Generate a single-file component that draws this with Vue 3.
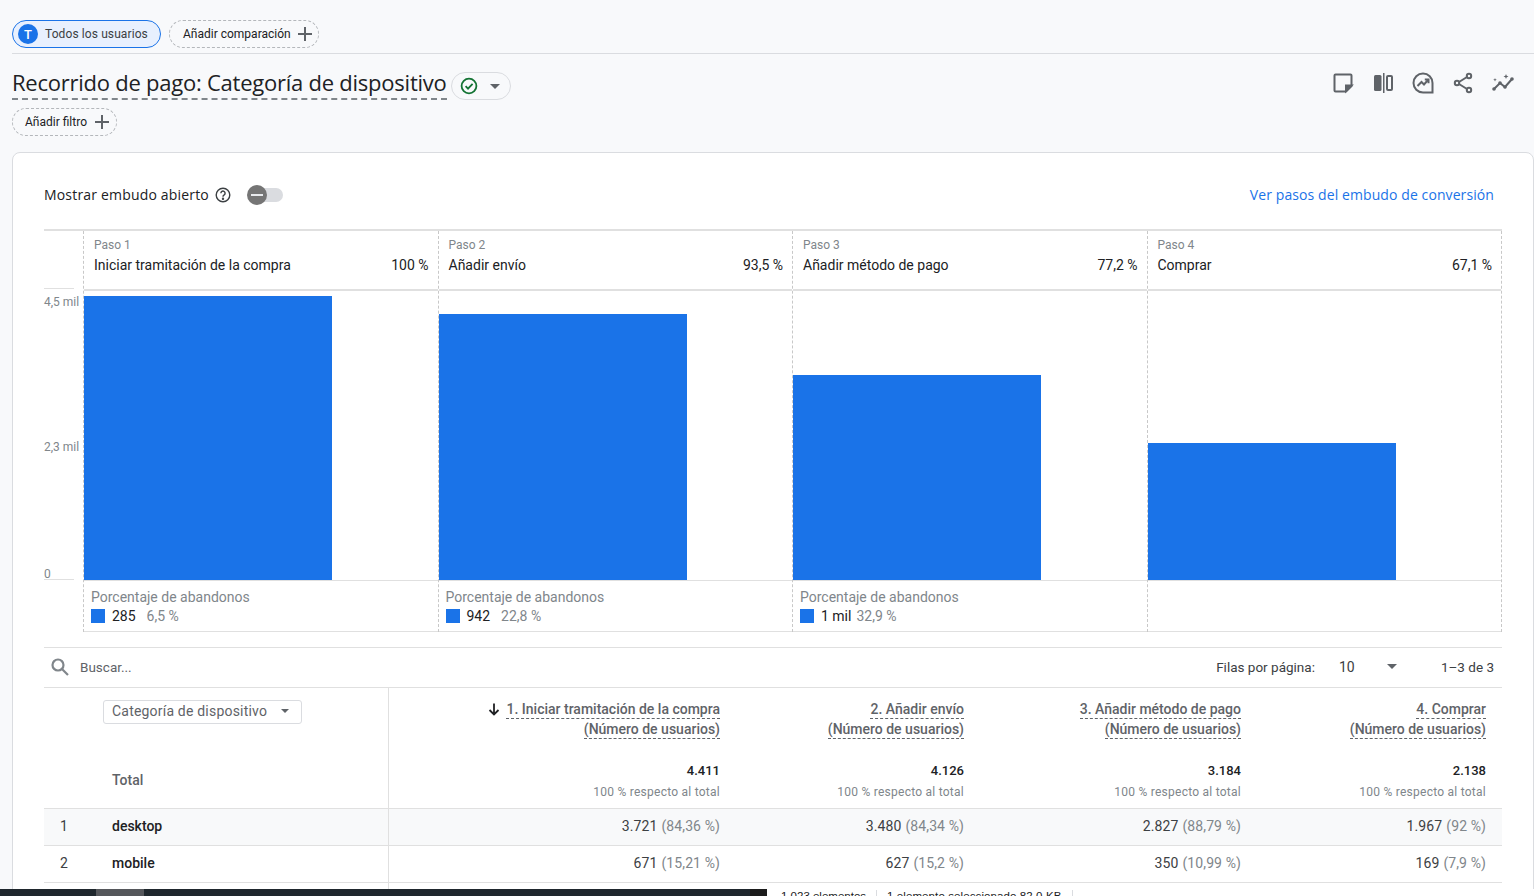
<script setup>
const steps = [
  { n: 'Paso 1', name: 'Iniciar tramitación de la compra', pct: '100 %', h: 284, drop: '285', dropPct: '6,5 %' },
  { n: 'Paso 2', name: 'Añadir envío', pct: '93,5 %', h: 266, drop: '942', dropPct: '22,8 %' },
  { n: 'Paso 3', name: 'Añadir método de pago', pct: '77,2 %', h: 205, drop: '1 mil', dropPct: '32,9 %' },
  { n: 'Paso 4', name: 'Comprar', pct: '67,1 %', h: 137 }
]

const columns = [
  { title: '1. Iniciar tramitación de la compra', total: '4.411', sorted: true },
  { title: '2. Añadir envío', total: '4.126' },
  { title: '3. Añadir método de pago', total: '3.184' },
  { title: '4. Comprar', total: '2.138' }
]

const rows = [
  { id: 1, name: 'desktop', cells: [['3.721', '(84,36 %)'], ['3.480', '(84,34 %)'], ['2.827', '(88,79 %)'], ['1.967', '(92 %)']] },
  { id: 2, name: 'mobile', cells: [['671', '(15,21 %)'], ['627', '(15,2 %)'], ['350', '(10,99 %)'], ['169', '(7,9 %)']] }
]
</script>

<template>
  <div class="page">
    <div class="top-bar">
      <div class="chip chip-active">
        <span class="avatar">T</span>
        <span>Todos los usuarios</span>
      </div>
      <div class="chip chip-add chip-compare">
        <span>Añadir comparación</span>
        <svg class="plus" viewBox="0 0 16 16"><path d="M8 1v14M1 8h14" /></svg>
      </div>
    </div>

    <div class="title-row">
      <div class="title-left">
        <h1 class="title">Recorrido de pago: Categoría de dispositivo</h1>
        <div class="status-pill">
          <svg width="20" height="20" viewBox="0 0 20 20" fill="none" stroke="#137333" stroke-width="1.8">
            <circle cx="10" cy="10" r="7.4" />
            <path d="M6.6 10.2l2.4 2.4 4.6-4.8" />
          </svg>
          <span class="caret"></span>
        </div>
      </div>
      <div class="actions">
        <svg viewBox="0 0 24 24" fill="none" stroke="#5f6368" stroke-width="2">
          <path d="M3.500 4.500a1 1 0 0 1 1-1h15a1 1 0 0 1 1 1V15l-5.500 5.500H4.500a1 1 0 0 1-1-1z" />
          <path d="M15 20v-5.500h5.500l-5.500 5.500z" fill="#5f6368" />
        </svg>
        <svg viewBox="0 0 24 24" fill="#5f6368">
          <rect x="3" y="4" width="7.500" height="16" rx="1.500" />
          <rect x="12" y="2" width="1.500" height="20" />
          <rect x="16" y="5" width="5" height="14" rx="1" fill="none" stroke="#5f6368" stroke-width="2" />
        </svg>
        <svg viewBox="0 0 24 24" fill="none" stroke="#5f6368" stroke-width="2">
          <path d="M12 2.500a9.500 9.500 0 1 0 0 19h9.500V12A9.500 9.500 0 0 0 12 2.500z" />
          <path d="M6.500 15l4-4 2.500 2.500 4-4.500" />
          <path d="M13.800 8.500h3.700v3.700" />
        </svg>
        <svg viewBox="0 0 24 24" fill="none" stroke="#5f6368" stroke-width="2">
          <circle cx="18" cy="5" r="2.200" />
          <circle cx="6" cy="12" r="2.200" />
          <circle cx="18" cy="19" r="2.200" />
          <path d="M8 11l8-5M8 13l8 5" />
        </svg>
        <svg viewBox="0 0 24 24" fill="#5f6368">
          <path d="M3 18l6-6 5 4 7-8" fill="none" stroke="#5f6368" stroke-width="2" />
          <circle cx="3" cy="18" r="1.800" />
          <circle cx="9" cy="12" r="1.800" />
          <circle cx="14" cy="16" r="1.800" />
          <circle cx="21" cy="8" r="1.800" />
          <path d="M15 3l.7 1.800 1.800.7-1.800.7-.7 1.800-.7-1.800-1.800-.7 1.800-.7zM4 7l.5 1.300 1.300.5-1.300.5-.5 1.300-.5-1.300-1.300-.5 1.300-.5z" />
        </svg>
      </div>
    </div>

    <div class="chip chip-add chip-filter">
      <span>Añadir filtro</span>
      <svg class="plus" viewBox="0 0 16 16"><path d="M8 1v14M1 8h14" /></svg>
    </div>

    <section class="card">
      <div class="card-head">
        <div class="open-funnel">
          <span class="head-text">Mostrar embudo abierto</span>
          <svg width="18" height="18" viewBox="0 0 18 18" fill="none" stroke="#3c4043" stroke-width="1.400">
            <circle cx="9" cy="9" r="6.800" />
            <path d="M6.900 7.200a2.100 2.100 0 1 1 3.300 1.700c-.8.500-1.200.9-1.200 1.800" />
            <circle cx="9" cy="12.700" r=".5" fill="#3c4043" />
          </svg>
          <div class="toggle">
            <span class="toggle-track"></span>
            <span class="toggle-knob"></span>
          </div>
        </div>
        <a class="funnel-link head-text">Ver pasos del embudo de conversión</a>
      </div>

      <div class="funnel">
        <div class="axis">
          <div class="axis-head"></div>
          <div class="axis-plot">
            <div class="tick tick-top">4,5 mil</div>
            <div class="tick tick-mid">2,3 mil</div>
            <div class="tick tick-zero">0</div>
          </div>
        </div>
        <div v-for="step in steps" :key="step.n" class="step">
          <div class="step-head">
            <div class="step-num">{{ step.n }}</div>
            <div class="step-line">
              <span>{{ step.name }}</span>
              <span>{{ step.pct }}</span>
            </div>
          </div>
          <div class="step-plot">
            <div class="bar" :style="{ height: step.h + 'px' }"></div>
          </div>
          <div class="step-drop">
            <template v-if="step.drop">
              <div class="drop-label">Porcentaje de abandonos</div>
              <div class="drop-values">
                <span class="swatch"></span>
                <span class="drop-num">{{ step.drop }}</span>
                <span class="drop-pct">{{ step.dropPct }}</span>
              </div>
            </template>
          </div>
        </div>
      </div>

      <div class="search-row">
        <svg class="search-icon" width="20" height="20" viewBox="0 0 20 20" fill="none" stroke="#80868b" stroke-width="2.200">
          <circle cx="8" cy="8" r="5.500" />
          <path d="M12 12l6 6" />
        </svg>
        <span class="search-text">Buscar...</span>
        <div class="pager">
          <span>Filas por página:</span>
          <span class="pager-size">10</span>
          <span class="caret"></span>
          <span class="pager-range">1–3 de 3</span>
        </div>
      </div>

      <div class="report">
        <div class="dim-col">
          <div class="dim-head">
            <div class="dim-select">
              <span>Categoría de dispositivo</span>
              <span class="caret caret-small"></span>
            </div>
          </div>
          <div class="dim-total">Total</div>
        </div>
        <div class="metric-head">
          <div v-for="col in columns" :key="col.title" class="metric-col">
            <div class="metric-title">
              <svg v-if="col.sorted" class="sort-arrow" width="14" height="14" viewBox="0 0 14 14" fill="none" stroke="#202124" stroke-width="1.800">
                <path d="M7 1.500v11M2.500 8L7 12.500 11.500 8" />
              </svg>
              <span class="dashed">{{ col.title }}</span>
            </div>
            <div class="metric-title"><span class="dashed">(Número de usuarios)</span></div>
            <div class="metric-total">{{ col.total }}</div>
            <div class="metric-sub">100 % respecto al total</div>
          </div>
        </div>
      </div>

      <div v-for="row in rows" :key="row.id" class="row" :class="{ 'row-shaded': row.id === 1 }">
        <div class="row-dim">
          <span class="row-id">{{ row.id }}</span>
          <span class="row-name">{{ row.name }}</span>
        </div>
        <div class="row-cells">
          <div v-for="(cell, i) in row.cells" :key="i" class="row-cell">
            {{ cell[0] }} <span class="cell-pct">{{ cell[1] }}</span>
          </div>
        </div>
      </div>
      <div class="row-rest"></div>
    </section>

    <div class="taskbar">
      <div class="taskbar-dark">
        <span class="taskbar-thumb"></span>
        <span class="taskbar-end"></span>
      </div>
      <div class="taskbar-status">
        <span class="status-count">1.023 elementos</span>
        <span class="status-selected">1 elemento seleccionado 82,0 KB</span>
      </div>
    </div>
  </div>
</template>

<style>
html, body {
  margin: 0;
  background: #f8f9fb;
  overflow: hidden;
}
</style>

<style scoped>
.page {
  position: relative;
  width: 1534px;
  height: 896px;
  overflow: hidden;
  padding: 20px 0 0 12px;
  box-sizing: border-box;
  background: #f8f9fb;
  font-family: Roboto, "Liberation Sans", sans-serif;
  color: #202124;
}

.top-bar {
  display: flex;
  gap: 8px;
  height: 33px;
  border-bottom: 1px solid #dadce0;
  align-items: flex-start;
}

.chip {
  display: inline-flex;
  align-items: center;
  box-sizing: border-box;
  height: 28px;
  border-radius: 14px;
  font-size: 12px;
}

.chip-active {
  width: 149px;
  border: 1px solid #1a73e8;
  background: #e8f0fe;
  padding-left: 5px;
  gap: 7px;
  color: #3c4043;
  letter-spacing: 0.1px;
}

.avatar {
  width: 20px;
  height: 20px;
  border-radius: 50%;
  background: #1a73e8;
  color: #fff;
  font-size: 13px;
  font-weight: 500;
  display: flex;
  align-items: center;
  justify-content: center;
}

.chip-add {
  border: 1px dashed #b4b7bb;
  padding-left: 12px;
  gap: 7px;
}

.chip-compare {
  width: 150px;
  padding-left: 13px;
  gap: 6px;
}

.chip-filter {
  width: 105px;
  display: flex;
  margin-top: 8px;
}

.plus {
  width: 16px;
  height: 16px;
  fill: none;
  stroke: #5f6368;
  stroke-width: 2;
}

.title-row {
  display: flex;
  justify-content: space-between;
  padding-top: 18px;
  height: 28px;
}

.title-left {
  display: flex;
  align-items: flex-start;
  gap: 4px;
}

.title {
  margin: 0;
  padding-bottom: 6px;
  font-family: "Open Sans", Roboto, sans-serif;
  font-size: 22px;
  font-weight: 400;
  line-height: 20px;
  letter-spacing: -0.24px;
  border-bottom: 2px dashed #80868b;
  color: #202124;
}

.status-pill {
  width: 60px;
  height: 28px;
  box-sizing: border-box;
  border: 1px solid #dadce0;
  border-radius: 14px;
  display: flex;
  align-items: center;
  gap: 11px;
  padding-left: 7px;
}

.caret {
  width: 0;
  height: 0;
  border-left: 5px solid transparent;
  border-right: 5px solid transparent;
  border-top: 5px solid #5f6368;
}

.caret-small {
  border-left-width: 4px;
  border-right-width: 4px;
  border-top-width: 4px;
}

.actions {
  display: flex;
  gap: 16px;
  padding-right: 19px;
  margin-top: -1px;
}

.actions svg {
  width: 24px;
  height: 24px;
}

.card {
  width: 1522px;
  height: 800px;
  box-sizing: border-box;
  margin-top: 16px;
  padding: 0 32px 0 31px;
  background: #fff;
  border: 1px solid #dadce0;
  border-radius: 8px 8px 0 0;
}

.card-head {
  display: flex;
  justify-content: space-between;
  align-items: center;
  height: 76px;
  box-sizing: border-box;
  padding: 8px 7px 0 0;
}

.open-funnel {
  display: flex;
  align-items: center;
  gap: 5px;
  font-family: "Open Sans", Roboto, sans-serif;
  font-size: 14px;
}

.head-text {
  margin-top: -2px;
  letter-spacing: 0.18px;
}

.toggle {
  position: relative;
  width: 36px;
  height: 20px;
  margin-left: 10px;
}

.toggle-track {
  position: absolute;
  left: 4px;
  top: 3px;
  width: 32px;
  height: 14px;
  border-radius: 7px;
  background: #dadce0;
}

.toggle-knob {
  position: absolute;
  left: 0;
  top: 0;
  width: 20px;
  height: 20px;
  border-radius: 50%;
  background: #757575;
}

.toggle-knob::after {
  content: "";
  position: absolute;
  left: 4px;
  top: 9px;
  width: 12px;
  height: 2px;
  background: #e8eaed;
}

.funnel-link {
  color: #1a73e8;
  font-family: "Open Sans", Roboto, sans-serif;
  font-size: 14px;
  letter-spacing: 0.09px;
}

.funnel {
  display: grid;
  grid-template-columns: 39px 354.500px 354.500px 354.500px 355.500px;
  width: 1458px;
  height: 401px;
  border-top: 2px solid #e0e0e0;
}

.axis-head {
  height: 58px;
}

.axis-plot {
  position: relative;
  height: 290px;
  margin-right: 9px;
}

.tick {
  position: absolute;
  left: 0;
  font-size: 12px;
  color: #80868b;
  line-height: 14px;
  white-space: nowrap;
}

.tick-top {
  top: 6px;
}

.tick-top::before {
  content: "";
  position: absolute;
  left: 0;
  top: -7px;
  width: 30px;
  height: 1px;
  background: #e0e0e0;
}

.tick-mid {
  top: 151px;
}

.tick-zero {
  top: 278px;
}

.tick-zero::after {
  content: "";
  position: absolute;
  left: 0;
  top: 12px;
  width: 30px;
  height: 1px;
  background: #e0e0e0;
}

.step {
  border-left: 1px dashed #c8c8c8;
  display: flex;
  flex-direction: column;
}

.step:last-child {
  border-right: 1px dashed #c8c8c8;
}

.step-head {
  height: 60px;
  box-sizing: border-box;
  padding: 6px 9px 0 10px;
  border-bottom: 2px solid #e0e0e0;
}

.step-num {
  font-size: 12px;
  line-height: 16px;
  color: #80868b;
}

.step-line {
  display: flex;
  justify-content: space-between;
  margin-top: 2px;
  font-size: 14px;
  line-height: 20px;
}

.step-plot {
  height: 290px;
  display: flex;
  align-items: flex-end;
  border-bottom: 1px solid #e0e0e0;
  box-sizing: border-box;
}

.bar {
  width: 248px;
  background: #1a73e8;
}

.step-drop {
  flex: 1;
  box-sizing: border-box;
  padding: 8px 6px 0 7px;
  border-bottom: 1px solid #e0e0e0;
}

.drop-label {
  font-size: 14px;
  line-height: 17px;
  color: #80868b;
}

.drop-values {
  display: flex;
  align-items: center;
  font-size: 14px;
  line-height: 20px;
}

.swatch {
  width: 14px;
  height: 14px;
  background: #1a73e8;
  margin-right: 7px;
}

.drop-num {
  margin-right: 11px;
}

.step:nth-child(4) .drop-num {
  margin-right: 5px;
}

.drop-pct {
  color: #80868b;
}

.search-row {
  display: flex;
  align-items: center;
  width: 1458px;
  height: 39px;
  box-sizing: content-box;
  margin-top: 15px;
  border-top: 1px solid #e0e0e0;
  border-bottom: 1px solid #e0e0e0;
  font-size: 13.500px;
}

.search-icon {
  margin: -2px 0 0 6px;
}

.search-text {
  margin: -2px 0 0 10px;
  color: #5f6368;
}

.pager {
  display: flex;
  align-items: center;
  margin: -2px 0 0 auto;
  padding-right: 8px;
  color: #3c4043;
}

.pager-size {
  margin-left: 24px;
  width: 48px;
  font-size: 14px;
}

.pager-range {
  margin-left: 44px;
}

.report {
  display: flex;
  width: 1458px;
  height: 120px;
  border-bottom: 1px solid #e0e0e0;
}

.dim-col {
  width: 345px;
  border-right: 1px solid #e0e0e0;
  box-sizing: border-box;
  flex: none;
}

.dim-head {
  height: 67px;
  padding: 12px 0 0 59px;
  box-sizing: border-box;
}

.dim-select {
  display: flex;
  align-items: center;
  justify-content: space-between;
  width: 199px;
  height: 24px;
  box-sizing: border-box;
  padding: 0 12px 2px 8px;
  border: 1px solid #dadce0;
  border-radius: 3px;
  font-size: 14px;
  letter-spacing: 0.2px;
  color: #5f6368;
}

.dim-total {
  padding: 17px 0 0 68px;
  font-size: 14px;
  font-weight: 500;
  color: #5f6368;
}

.metric-head,
.row-cells {
  display: grid;
  grid-template-columns: 331px 244px 277px 245px;
  flex: 1;
}

.metric-col {
  padding-top: 11px;
  text-align: right;
}

.metric-title {
  display: flex;
  justify-content: flex-end;
  align-items: center;
  height: 20px;
  font-size: 14px;
  font-weight: 500;
  color: #5f6368;
}

.dashed {
  border-bottom: 1px dashed #5f6368;
  line-height: 18px;
}

.sort-arrow {
  margin-right: 5px;
}

.metric-total {
  margin-top: 24px;
  font-size: 13px;
  line-height: 16px;
  font-weight: 500;
}

.metric-sub {
  margin-top: 5px;
  font-size: 12px;
  line-height: 16px;
  letter-spacing: 0.25px;
  color: #80868b;
}

.row {
  display: flex;
  width: 1458px;
  height: 37px;
  box-sizing: border-box;
  border-bottom: 1px solid #e0e0e0;
  font-size: 14px;
}

.row-shaded {
  background: #f8f9fa;
}

.row-dim {
  width: 345px;
  flex: none;
  display: flex;
  align-items: center;
  box-sizing: border-box;
  border-right: 1px solid #e0e0e0;
  padding: 0 0 3px 16px;
}

.row-id {
  width: 52px;
  color: #3c4043;
}

.row-name {
  font-weight: 500;
}

.row-cell {
  display: flex;
  align-items: center;
  justify-content: flex-end;
  gap: 4px;
  padding-bottom: 3px;
  letter-spacing: 0.1px;
  color: #3c4043;
}

.cell-pct {
  color: #80868b;
}

.row-rest {
  width: 345px;
  height: 10px;
  box-sizing: border-box;
  border-right: 1px solid #e0e0e0;
}

.taskbar {
  position: absolute;
  left: 0;
  right: 0;
  top: 889px;
  height: 7px;
  display: flex;
  overflow: hidden;
  background: #fff;
}

.taskbar-dark {
  position: relative;
  width: 767px;
  height: 7px;
  background: #1f272d;
}

.taskbar-thumb {
  position: absolute;
  left: 96px;
  top: 0;
  width: 48px;
  height: 7px;
  background: #55575b;
}

.taskbar-end {
  position: absolute;
  right: 0;
  top: 0;
  width: 17px;
  height: 7px;
  background: #1c1c1c;
}

.taskbar-status {
  display: flex;
  margin-top: 1px;
  font-family: "Liberation Sans", sans-serif;
  font-size: 11.500px;
  line-height: 13px;
  color: #202124;
}

.status-count {
  width: 95px;
  margin-left: 14px;
  border-right: 1px solid #dadce0;
}

.status-selected {
  width: 185px;
  padding-left: 10px;
  letter-spacing: 0.1px;
  border-right: 1px solid #dadce0;
}
</style>
